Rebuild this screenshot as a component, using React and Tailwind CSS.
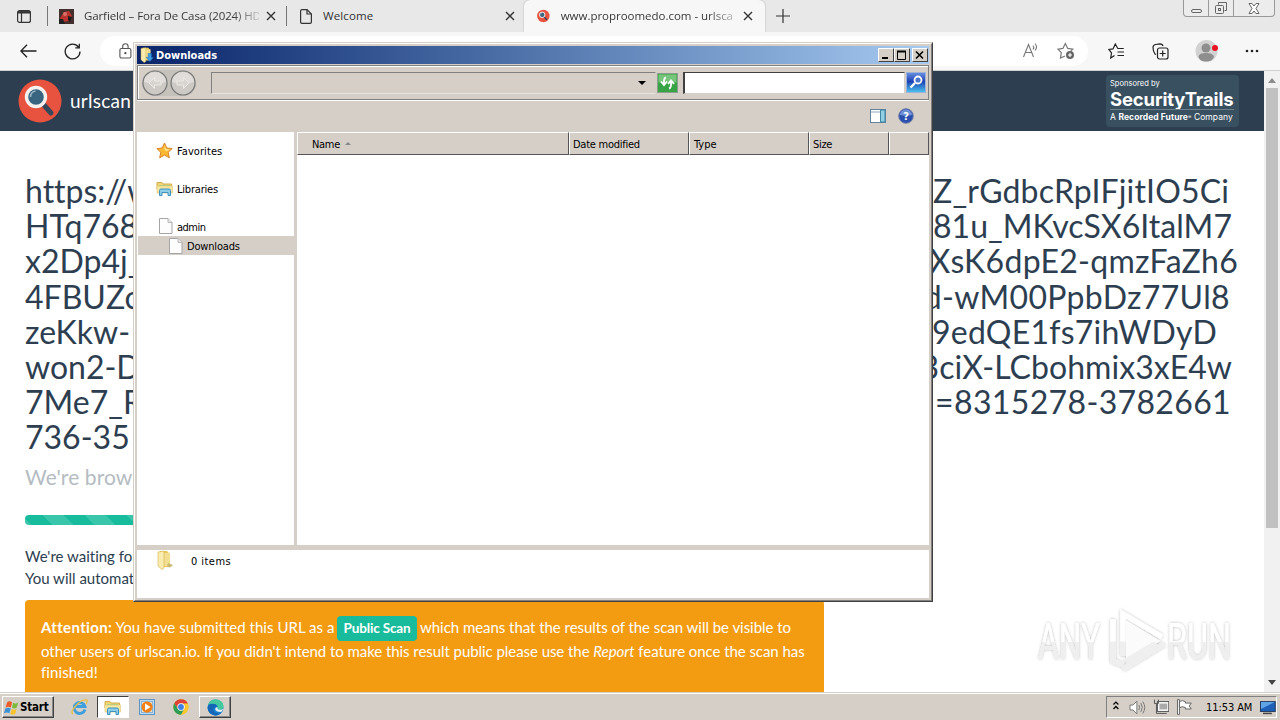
import React from 'react';

const urlLines = [
  { left: 'https://w', right: 'Z_rGdbcRpIFjitIO5Ci', style: 'mr-[35px] tracking-[0.150px]' },
  { left: 'HTq768', right: '81u_MKvcSX6ItalM7', style: 'mr-[32px] tracking-[0.050px]' },
  { left: 'x2Dp4j_', right: 'XsK6dpE2-qmzFaZh6', style: 'mr-[26px] tracking-[0.300px]' },
  { left: '4FBUZc', right: 'd-wM00PpbDz77Ul8', style: 'mr-[34px] tracking-[0.350px]' },
  { left: 'zeKkw-', right: '9edQE1fs7ihWDyD', style: 'mr-[47px] tracking-[0.250px]' },
  { left: 'won2-D', right: '3ciX-LCbohmix3xE4w', style: 'mr-[32px] tracking-[0.050px]' },
  { left: '7Me7_R', right: '=8315278-3782661', style: 'mr-[33px] tracking-[0.350px]' },
  { left: '736-35', right: '', style: 'mr-0' },
];

function CloseX() {
  return (
    <svg width="10" height="10" viewBox="0 0 10 10" stroke="#333" strokeWidth="1.4">
      <path d="M1 1l8 8M9 1L1 9" />
    </svg>
  );
}

function LensLogo({ size }) {
  return (
    <svg width={size} height={size} viewBox="0 0 44 44">
      <circle cx="22" cy="22" r="21.500" fill="#e8533f" />
      <path d="M25 25l8 9" stroke="#34485c" strokeWidth="5" strokeLinecap="round" />
      <circle cx="18" cy="18" r="9.5" fill="#3a6580" stroke="#f4f1ee" strokeWidth="3.4" />
      <path d="M12.500 18a6 6 0 0 1 5-6" fill="none" stroke="#9db9c8" strokeWidth="1.600" />
    </svg>
  );
}

function LibraryIcon({ className }) {
  return (
    <svg className={className} width="18" height="17" viewBox="0 0 18 17">
      <path d="M1 4V2.500h5l1 1.500h8.500V9H1z" fill="#f2d675" stroke="#d0ac4a" />
      <path d="M3 5h11v5H3z" fill="#a6d38d" />
      <path d="M1 6h15.500v7H1z" fill="#f8e7a0" stroke="#dfc469" strokeWidth=".6" />
      <path d="M3.500 15.500V10.500Q3.500 9 5 9h8q1.500 0 1.500 1.500v5H12v-3H6v3z" fill="#8ccdea" stroke="#3f91be" />
    </svg>
  );
}

function FileIcon() {
  return (
    <svg width="14" height="16" viewBox="0 0 14 16">
      <path d="M.5.5h8.500l4 4v11H.5z" fill="#fdfdfd" stroke="#a5a5a5" />
      <path d="M9 .5v4h4" fill="#e8e8e8" stroke="#b8b8b8" />
    </svg>
  );
}

function FolderIcon({ className, download }) {
  return (
    <svg className={className} width="17" height="20" viewBox="0 0 17 20">
      <path d="M3 1h7l2 2v14H3z" fill="#e9c95c" />
      <path d="M6 3h7v13H6z" fill="#f3df91" />
      <path d="M1 2l6-1v17l-2 1.500L1 16z" fill="#f9ecae" stroke="#d3b24c" strokeWidth=".6" />
      {download ? (
        <path d="M10 8h4v5h2.500L12 18l-4.500-5H10z" fill="#3ba0e6" stroke="#1c66b5" strokeWidth=".7" />
      ) : (
        <path d="M11 13l5 2-3 2.500-3-1z" fill="#c9ba72" />
      )}
    </svg>
  );
}

function TabBar() {
  return (
    <div className="flex h-8 bg-[#e8e8e8] text-[11.500px] text-[#333] font-['Open_Sans',sans-serif]">
      <div className="flex items-center w-[47px] pl-[17px]">
        <svg width="14" height="13" viewBox="0 0 14 13" fill="none" stroke="#333" strokeWidth="1.200">
          <rect x=".6" y=".6" width="12.800" height="11.800" rx="2" />
          <path d="M4.500 3v9" />
          <path d="M1 2.300h12" strokeWidth="2.400" />
        </svg>
      </div>
      <div className="flex items-center w-[239px] self-center h-5 border-l border-[#777] pl-[11px]">
        <svg width="15" height="15" viewBox="0 0 15 15">
          <rect width="15" height="15" fill="#43302d" />
          <path d="M1 9l4-6 5-1 3 5-3 5-6 1z" fill="#b93431" />
          <path d="M0 10h4l2 5H0z" fill="#222" />
          <circle cx="6" cy="5" r="2" fill="#da7168" />
          <path d="M9 7l4 1-2 5-2-2z" fill="#211a1a" />
        </svg>
        <span className="ml-2.5 w-[175px] whitespace-nowrap tracking-[-0.110px] bg-linear-to-r from-[#333] from-85% to-[#33333330] bg-clip-text text-transparent">
          Garfield – Fora De Casa (2024) HD
        </span>
        <span className="ml-[7px]"><CloseX /></span>
      </div>
      <div className="flex items-center w-[238px] self-center h-5 border-l border-[#777] pl-[13px]">
        <svg width="12" height="15" viewBox="0 0 12 15" fill="none" stroke="#333" strokeWidth="1.200">
          <path d="M.6 2q0-1.400 1.400-1.400h5l4.400 4.400v8q0 1.400-1.400 1.400H2Q.6 14.400.6 13z" />
          <path d="M7 .6V5h4.400" />
        </svg>
        <span className="ml-[11px] w-[182px] tracking-[0.100px]">Welcome</span>
        <CloseX />
      </div>
      <div className="flex items-center w-[241px] rounded-t-md bg-[#f7f7f7] shadow-[0_0_2px_#aaa] pl-[13px] pr-3">
        <LensLogo size={14} />
        <span className="ml-[11px] w-[174px] whitespace-nowrap tracking-[-0.020px] bg-linear-to-r from-[#333] from-85% to-[#33333350] bg-clip-text text-transparent">
          www.proproomedo.com - urlsca
        </span>
        <span className="ml-[10px]"><CloseX /></span>
      </div>
      <div className="flex items-center pl-[11px]">
        <svg width="14" height="14" viewBox="0 0 14 14" stroke="#333" strokeWidth="1.200">
          <path d="M7 0v14M0 7h14" />
        </svg>
      </div>
      <div className="ml-auto mr-[5px] flex h-[17px] w-[92px] rounded-b border border-t-0 border-[#999] bg-[#ececec]">
        <div className="flex w-[25px] items-end justify-center border-r border-[#999] pb-[3px]">
          <span className="h-[4px] w-[11px] rounded-sm border border-[#666]" />
        </div>
        <div className="flex w-[25px] items-center justify-center border-r border-[#999]">
          <svg width="14" height="14" viewBox="0 0 14 14" fill="none" stroke="#666">
            <path d="M4.500 3.500V1.500h8v8h-2" />
            <rect x="1.500" y="4.500" width="8" height="8" rx="1" />
            <rect x="4.500" y="7.500" width="2" height="2" />
          </svg>
        </div>
        <div className="flex flex-1 items-center justify-center">
          <svg width="12" height="11" viewBox="0 0 12 11" fill="#fff" stroke="#666">
            <path d="M1 .5h3l2 2.500 2-2.500h3L8 5.500l3 5H8L6 8l-2 2.500H1l3-5z" />
          </svg>
        </div>
      </div>
    </div>
  );
}

function Toolbar() {
  return (
    <div className="flex h-[39px] items-center border-b border-[#cfcfcf] bg-[#f7f7f7]">
      <div className="flex w-[100px] items-center gap-[27px] pl-5">
        <svg width="17" height="14" viewBox="0 0 17 14" fill="none" stroke="#222" strokeWidth="1.300">
          <path d="M7 .7L.9 7 7 13.300M1 7h15.500" />
        </svg>
        <svg width="17" height="17" viewBox="0 0 17 17" fill="none" stroke="#222" strokeWidth="1.300">
          <path d="M14.500 4A7.400 7.400 0 1 0 16 8.500M15.300.8v4h-4" />
        </svg>
      </div>
      <div className="flex h-[30px] w-[988px] items-center rounded-full bg-white pl-[19px] pr-[13px]">
        <svg width="13" height="16" viewBox="0 0 13 16" fill="none" stroke="#555" strokeWidth="1.100">
          <rect x=".9" y="5.500" width="11" height="9.500" rx="1.500" />
          <path d="M3.700 5.500V3.500a2.700 2.700 0 0 1 5.400 0v2" />
          <circle cx="6.400" cy="10.200" r=".6" fill="#555" />
        </svg>
        <svg className="ml-auto -mt-0.5" width="18" height="17" viewBox="0 0 18 17" fill="none" stroke="#777" strokeWidth="1.100">
          <path d="M1.500 15L6.500 2.500 11.500 15M3.300 10.500h6.500M11 3.500q1.500 2 0 4M13 1.500q3 3.500 0 7" />
        </svg>
        <svg className="ml-[17px]" width="18" height="18" viewBox="0 0 18 18" fill="none" stroke="#777" strokeWidth="1.200">
          <path d="M8 14l-4.500 2 .8-5.300L1 7.200l4.900-.8L8.300 1.500l2.500 4.900 5 .8-2 2" />
          <circle cx="13" cy="13" r="4" fill="#666" stroke="none" />
          <path d="M13 11v4M11 13h4" stroke="#fff" />
        </svg>
      </div>
      <svg className="ml-5" width="17" height="16" viewBox="0 0 17 16" fill="none" stroke="#222" strokeWidth="1.200">
        <path d="M6.500 12.500L2.700 15l.8-5L1 6.500l4-.6L7.300 1l2.500 4.500h6M9.500 9H16M9.500 12.500H16" />
      </svg>
      <svg className="ml-[27px]" width="17" height="17" viewBox="0 0 17 17" fill="none" stroke="#222" strokeWidth="1.200">
        <path d="M4 11.500l-1-.5Q1 8 1 4.500 1 2 3.500 1.500L8 .8q2.500 0 3 2.200" />
        <rect x="5.500" y="5" width="10.500" height="11" rx="2" />
        <path d="M10.700 7.500v6M7.700 10.500h6" />
      </svg>
      <svg className="ml-[26px]" width="24" height="24" viewBox="0 0 24 24">
        <circle cx="11.500" cy="12" r="11" fill="#d2d2d2" />
        <circle cx="11" cy="9" r="4.500" fill="#8e8e8e" />
        <path d="M3.500 18q0-4 7.500-4t8 4q-2 4.500-8 4.500T3.500 18" fill="#8e8e8e" />
        <circle cx="20" cy="9" r="3" fill="#e81123" />
      </svg>
      <svg className="ml-[26px]" width="14" height="4" viewBox="0 0 14 4" fill="#222">
        <circle cx="2" cy="2" r="1.300" /><circle cx="7" cy="2" r="1.300" /><circle cx="12" cy="2" r="1.300" />
      </svg>
    </div>
  );
}

function SiteHeader() {
  return (
    <div className="flex h-[60px] items-center bg-[#2c3e50] pl-[18px] pr-[25px]">
      <LensLogo size={44} />
      <span className="ml-[8px] text-[19px] tracking-[0.250px] text-white">urlscan</span>
      <div className="ml-auto flex h-[52px] w-[133px] flex-col rounded-sm bg-[#38505f] pl-[4px] font-['Inter',sans-serif] text-white">
        <span className="mt-[4px] text-[7.500px] leading-[10px] tracking-[0.050px]">Sponsored by</span>
        <span className="text-[18.500px] leading-[20px] font-bold tracking-[-0.150px]">SecurityTrails</span>
        <span className="w-[124px] border-t border-[#6b7f8c] pt-[2px] text-[8.500px] leading-[10px] tracking-[0.070px] whitespace-nowrap">
          A <b>Recorded Future</b>
          <span className="text-[5px] align-top">®</span> Company
        </span>
      </div>
    </div>
  );
}

function Watermark() {
  return (
    <svg className="absolute left-[1030px] top-[600px]" width="220" height="84" viewBox="0 0 220 84">
      <defs>
        <linearGradient id="mark" gradientUnits="userSpaceOnUse" x1="0" y1="0" x2="0" y2="84">
          <stop offset=".49" stopColor="#fff" />
          <stop offset=".5" stopColor="#efefef" />
        </linearGradient>
        <linearGradient id="letters" x1="0" y1="0" x2="0" y2="1">
          <stop offset=".5" stopColor="#fff" />
          <stop offset=".51" stopColor="#efefef" />
        </linearGradient>
        <filter id="glow" x="-10%" y="-20%" width="120%" height="140%">
          <feDropShadow dx="0" dy="0" stdDeviation="1.500" floodColor="#000" floodOpacity=".28" />
        </filter>
      </defs>
      <g filter="url(#glow)" fill="url(#letters)" fontFamily="Roboto, sans-serif" fontSize="50">
        <text transform="translate(8 59) scale(.635 1)">ANY</text>
        <text transform="translate(137 59) scale(.65 1)">RUN</text>
        <path d="M96 20L130 41 96 61z" fill="#fbfbfb" />
        <path d="M93 56V14l39 23M134 44L93 69M83 19v42l10 4M96 61l30-18" fill="none" stroke="url(#mark)" strokeWidth="5.500" />
      </g>
    </svg>
  );
}

function Page() {
  return (
    <div className="flex h-[621px] overflow-hidden bg-white font-['Lato',sans-serif] text-[#2c3e50]">
      <div className="w-[1264px]">
        <SiteHeader />
        <div className="pl-[25px] pt-[42px]">
          <div className="text-[32px] leading-[35.200px] [font-variant-ligatures:none]">
            {urlLines.map((line) => (
              <div key={line.left} className="flex justify-between whitespace-nowrap">
                <span>{line.left}</span>
                <span className={line.style}>{line.right}</span>
              </div>
            ))}
          </div>
          <p className="mt-[9px] text-[21px] leading-[26px] tracking-[0.100px] text-[#b4bcc2]">We're brow</p>
          <div className="mt-[25px] h-[10px] w-[799px] rounded bg-[#18bc9c] bg-[linear-gradient(45deg,#ffffff26_25%,transparent_25%,transparent_50%,#ffffff26_50%,#ffffff26_75%,transparent_75%)] bg-[length:42px_42px] bg-[position:18px_0]" />
          <div className="mt-[20px] text-[15px] leading-[22px] [font-variant-ligatures:none]">
            <p>We're waiting for</p>
            <p>You will automatic</p>
          </div>
          <div className="mt-[11px] h-[110px] w-[799px] rounded bg-[#f39c12] px-4 pt-[16px] text-[15px] leading-[21.500px] text-white whitespace-nowrap">
            <p className="flex h-[25px] items-center">
              <span className="w-[293px] tracking-[0.030px]"><b className="tracking-[0.350px]">Attention:</b> You have submitted this URL as a</span>
              <span className="ml-[3px] mr-[3px] flex h-[25px] w-20 items-center justify-center rounded-sm bg-[#18bc9c] pt-0.5 text-[13.500px] font-bold tracking-[-0.150px]">Public Scan</span>
              <span className="tracking-[-0.040px]">which means that the results of the scan will be visible to</span>
            </p>
            <p className="tracking-[-0.060px]">other users of urlscan.io. If you didn't intend to make this result public please use the <i>Report</i> feature once the scan has</p>
            <p className="tracking-[0.100px]">finished!</p>
          </div>
        </div>
      </div>
      <div className="flex w-4 flex-col items-center bg-[#f1f1f1]">
        <svg className="mt-[7px]" width="8" height="5" viewBox="0 0 8 5" fill="#8b8b8b"><path d="M4 0l4 5H0z" /></svg>
        <div className="mt-[5px] h-[440px] w-3 bg-[#c1c1c1]" />
        <svg className="mt-auto mb-[7px]" width="8" height="5" viewBox="0 0 8 5" fill="#444"><path d="M0 0h8L4 5z" /></svg>
      </div>
    </div>
  );
}

function CaptionButton({ children, className }) {
  return (
    <div className={`flex h-[14px] w-4 items-center justify-center border border-t-white border-l-white border-r-[#404040] border-b-[#404040] bg-[#d6cfc8] ${className}`}>
      <svg width="12" height="10" viewBox="0 0 12 10" fill="none" stroke="#000">{children}</svg>
    </div>
  );
}

function NavButton({ flip }) {
  return (
    <svg className={flip ? '-scale-x-100' : ''} width="26" height="26" viewBox="0 0 26 26">
      <circle cx="13" cy="13" r="12" fill="#cdcac6" stroke="#777" strokeWidth="1.200" />
      <path d="M2 12a11 10 0 0 1 22 0q-11 4-22 0" fill="#e0ddda" />
      <path d="M12.500 7.500L7 13l5.500 5.500V15H19v-4h-6.500z" fill="#d8d5d1" stroke="#ebe9e6" />
    </svg>
  );
}

function ColumnHeader({ className, children }) {
  return (
    <div className={`flex h-[23px] items-center border-t border-l border-t-white border-l-white border-r border-b border-r-[#555] border-b-[#555] pt-[3px] ${className}`}>
      {children}
    </div>
  );
}

function ExplorerWindow() {
  return (
    <div className="absolute left-[133px] top-[42px] h-[560px] w-[800px] border border-t-[#d6cfc8] border-l-[#d6cfc8] border-r-[#404040] border-b-[#404040] bg-[#d6cfc8] text-[11px] text-black font-['DejaVu_Sans_Condensed','DejaVu_Sans',sans-serif]">
      <div className="flex h-full flex-col border border-t-white border-l-white border-r-[#808080] border-b-[#808080] p-[2px]">
        <div className="flex h-[18px] shrink-0 items-center bg-linear-to-r from-[#0a246a] to-[#a6caf0] pl-0.5 pr-px">
          <FolderIcon className="h-4 w-4" download />
          <span className="ml-px pt-[2px] font-bold text-white">Downloads</span>
          <CaptionButton className="ml-auto"><path d="M2 8h6" strokeWidth="2" /></CaptionButton>
          <CaptionButton><path d="M1.500 1v8.500h8V1M1 1.500h9" /><path d="M1 1.500h9" strokeWidth="2" /></CaptionButton>
          <CaptionButton className="ml-[2px]"><path d="M2 1.500l7 7M9 1.500l-7 7" strokeWidth="1.600" /></CaptionButton>
        </div>

        <div className="mt-px flex h-[35px] shrink-0 items-center border border-[#808080] shadow-[inset_1px_1px_#fff,0_1px_#fff] pl-[4px]">
          <div className="flex gap-[2px] rounded-full bg-[#c5c1bb]">
            <NavButton />
            <NavButton flip />
          </div>
          <div className="ml-[15px] flex h-[22px] w-[445px] items-center justify-end border border-t-[#808080] border-l-[#808080] border-r-transparent border-b-[#e8e4df] pr-[9px]">
            <svg width="8" height="4" viewBox="0 0 8 4"><path d="M0 0h8L4 4z" /></svg>
          </div>
          <svg className="ml-px" width="21" height="20" viewBox="0 0 21 20">
            <rect x=".5" y=".5" width="20" height="19" fill="#37a344" stroke="#8c9d8b" />
            <rect x="1.500" y="1.500" width="18" height="8" fill="#77c47b" />
            <path d="M9 4.500Q6.500 5 7 11M4 8.500l3 3.500 3-3.500M12 15.500q2.500-.5 2-6.500M11 11l3-3.500 3 3.500" fill="none" stroke="#fff" strokeWidth="1.800" />
          </svg>
          <div className="ml-[5px] h-[22px] w-[222px] border border-t-[#404040] border-l-2 border-l-[#404040] border-r-[#d6cfc8] border-b-[#d6cfc8] bg-white" />
          <svg className="ml-px" width="20" height="21" viewBox="0 0 20 21">
            <defs>
              <linearGradient id="find" x1="0" y1="0" x2="0" y2="1">
                <stop offset="0" stopColor="#6b92e0" />
                <stop offset=".45" stopColor="#1c43b4" />
                <stop offset="1" stopColor="#4cc6ef" />
              </linearGradient>
            </defs>
            <rect x=".5" y=".5" width="19" height="20" fill="url(#find)" stroke="#9bb2dc" />
            <circle cx="12" cy="8" r="3.500" fill="#4b75cc" stroke="#fff" strokeWidth="1.800" />
            <path d="M9 11l-4.500 4.500" stroke="#fff" strokeWidth="2.400" />
          </svg>
        </div>

        <div className="flex h-[32px] shrink-0 items-center justify-end pr-[15px]">
          <svg width="16" height="14" viewBox="0 0 16 14">
            <rect x=".5" y=".5" width="15" height="13" fill="#fff" stroke="#63839b" />
            <path d="M1 3h9" stroke="#8ba8c0" />
            <rect x="10.500" y="1" width="4.500" height="12" fill="#8fd0e4" stroke="#4183a3" />
          </svg>
          <svg className="ml-[12px]" width="16" height="16" viewBox="0 0 16 16">
            <circle cx="8" cy="8" r="7.300" fill="#2c4fae" stroke="#7181a8" />
            <path d="M2 7a6 5.500 0 0 1 12 0q-6 1.500-12 0" fill="#6f8fd6" />
            <text x="8" y="12" textAnchor="middle" fill="#fff" fontSize="11" fontWeight="bold">?</text>
          </svg>
        </div>

        <div className="flex h-[413px] shrink-0">
          <div className="w-[157px] bg-white">
            <div className="mt-[8px] flex h-5 items-center pl-[19px]">
              <svg width="17" height="17" viewBox="0 0 17 17">
                <path d="M8.500 1l2.300 5 5.400.6-4 3.700 1.100 5.500-4.800-2.700-4.800 2.700 1.100-5.500-4-3.700 5.400-.6z" fill="#fbb830" stroke="#d9822b" />
                <path d="M8.500 3l1.500 4 4 .5-3.500 2L8.500 8z" fill="#fde28a" />
              </svg>
              <span className="ml-[4px] pt-[4px] tracking-[0.080px]">Favorites</span>
            </div>
            <div className="mt-[18px] flex h-5 items-center pl-[19px]">
              <LibraryIcon />
              <span className="ml-[3px] pt-[4px] tracking-[-0.200px]">Libraries</span>
            </div>
            <div className="mt-[18px] flex h-5 items-center pl-[22px]">
              <FileIcon />
              <span className="ml-[4px] pt-[4px] tracking-[-0.500px]">admin</span>
            </div>
            <div className="ml-px flex h-[19px] items-center bg-[#d6cfc8] pl-[31px]">
              <FileIcon />
              <span className="ml-[4px] pt-[3px] tracking-[-0.180px]">Downloads</span>
            </div>
          </div>
          <div className="ml-[3px] flex-1 bg-white">
            <div className="flex bg-[#d6cfc8]">
              <ColumnHeader className="w-[272px] pl-[14px]">
                <span className="tracking-[-0.300px]">Name</span>
                <svg className="ml-[5px] -mt-1" width="6" height="3" viewBox="0 0 6 3" fill="#888"><path d="M3 0l3 3H0z" /></svg>
              </ColumnHeader>
              <ColumnHeader className="w-[120px] pl-[3px] tracking-[-0.260px]">Date modified</ColumnHeader>
              <ColumnHeader className="w-[120px] pl-[4px]">Type</ColumnHeader>
              <ColumnHeader className="w-[80px] pl-[3px] tracking-[-0.300px]">Size</ColumnHeader>
              <ColumnHeader className="w-[40px]" />
            </div>
          </div>
        </div>

        <div className="mt-[5px] flex flex-1 bg-white pl-[20px]">
          <FolderIcon />
          <span className="ml-[17px] mt-[4px] tracking-[0.450px]">0 items</span>
        </div>
      </div>
    </div>
  );
}

function Taskbar() {
  return (
    <div className="flex h-7 items-center border-t border-[#d6cfc8] bg-[#d6cfc8] pl-[2px] pr-[3px] text-[11px] text-black shadow-[inset_0_1px_#fff] font-['DejaVu_Sans_Condensed','DejaVu_Sans',sans-serif]">
      <div className="mt-px flex h-[22px] w-[52px] items-center border border-t-white border-l-white border-r-[#404040] border-b-[#404040] pl-px shadow-[inset_-1px_-1px_#888]">
        <svg width="16" height="15" viewBox="0 0 15 14">
          <path d="M3 2q2-1.500 4.500 0L6.500 7Q4 5.500 1.500 7z" fill="#ec5b28" />
          <path d="M8.500 2.500q2.500 1.500 5-.5l-1.500 5q-2 1.500-4.500.3z" fill="#7dbb3d" />
          <path d="M1.300 8q2.500-1.500 5 0L5 12.500Q3 11 0 12.500z" fill="#3b93d6" />
          <path d="M7.300 8.500q2.500 1.300 4.500 0l-1.300 4.500q-2.500 1.300-4.500 0z" fill="#fac22b" />
        </svg>
        <span className="pt-[2px] text-[11.500px] font-bold tracking-[-0.200px]">Start</span>
      </div>
      <svg className="ml-[17px]" width="17" height="18" viewBox="0 0 17 18" fill="none">
        <path d="M14 11.500A5.500 5.500 0 1 1 14 8.500H5" stroke="#3f9fdc" strokeWidth="2.800" />
        <path d="M2 16Q-1 14 5 7.500T16 2q1 1-1 4" stroke="#eabf45" strokeWidth="1.300" />
      </svg>
      <div className="ml-[9px] mt-px flex h-[22px] w-[32px] items-center justify-center border border-t-[#404040] border-l-[#404040] border-r-white border-b-white bg-white">
        <LibraryIcon />
      </div>
      <svg className="ml-[10px]" width="16" height="16" viewBox="0 0 16 16">
        <rect x=".5" y=".5" width="15" height="15" fill="#b9dcf3" stroke="#5e93c2" />
        <rect x="2.500" y="2.500" width="11" height="11" fill="#f7e3c4" stroke="#88b4d8" />
        <circle cx="8" cy="8" r="5.500" fill="#f08019" />
        <path d="M6 4.500l5.500 3.500L6 11.500z" fill="#fff" />
      </svg>
      <svg className="ml-[18px]" width="16" height="16" viewBox="0 0 16 16">
        <circle cx="8" cy="8" r="7.700" fill="#f9c732" />
        <path d="M1.300 4.200A7.700 7.700 0 0 1 14.800 4.400H8L4.800 10z" fill="#dc4437" />
        <path d="M1.300 4.200A7.700 7.700 0 0 0 8 15.700l3.200-5.900L8 11.500 4.800 9.800z" fill="#2e9d57" />
        <circle cx="8" cy="8" r="3.700" fill="#fff" />
        <circle cx="8" cy="8" r="2.900" fill="#3f7fe8" />
      </svg>
      <div className="ml-[10px] mt-px flex h-[22px] w-[32px] items-center justify-center border border-t-white border-l-white border-r-[#404040] border-b-[#404040] shadow-[inset_-1px_-1px_#888]">
        <svg width="17" height="17" viewBox="0 0 17 17">
          <circle cx="8.500" cy="8.500" r="8" fill="#1680cf" />
          <path d="M1 6Q3 0 9 .5q7 .5 7.500 6.500 0 4-4 4-3 0-2-2Q11 6 7.500 5 4 4.500 1 6" fill="#43c8a0" />
          <path d="M.6 9Q1 5 5 4.800q5 0 5.500 3.200-4-.5-4 3 1 4 7 3.500-3 3-7 1.500Q1 14 .6 9" fill="#1566b6" />
          <path d="M10.500 8q0 1 0 1.500 0 1.500 3 1.300 2 0 2.700-1-.5 3-3 3.200-5-.5-5-3 .3-2 2.300-2" fill="#e4eef4" />
        </svg>
      </div>

      <div className="ml-auto mt-px flex h-[22px] w-[171px] items-center border border-t-[#808080] border-l-[#808080] border-r-white border-b-white pl-[6px]">
        <svg className="-mt-1" width="6" height="9" viewBox="0 0 6 9" fill="none" stroke="#000" strokeWidth="1.300">
          <path d="M.5 3.500L3 1l2.500 2.500M.5 8L3 5.500 5.500 8" />
        </svg>
        <svg className="ml-[10px]" width="17" height="15" viewBox="0 0 17 15" fill="none" stroke="#777">
          <path d="M1 5h3l4-4v13l-4-4H1z" fill="#fff" />
          <path d="M10 5q1.500 2.500 0 5M12 3q3 4.500 0 9M14 1.500q4 6 0 12" />
        </svg>
        <svg className="ml-[7px]" width="17" height="16" viewBox="0 0 17 16" fill="none" stroke="#555">
          <rect x="5.500" y="3.500" width="10" height="8" fill="#aaa" stroke="#fff" strokeWidth="2" />
          <rect x="4.500" y="2.500" width="11.500" height="10" />
          <path d="M7 14.500h7M1.500.5v4h4v-4M3.500 5v9.500h4" />
        </svg>
        <svg className="ml-[7px]" width="17" height="16" viewBox="0 0 17 16" fill="#fff" stroke="#666">
          <path d="M1.500.5h2v15h-2zM3.500 2.500q3-2 6 0v1.500h6l-2 3 2 3H9.500V8.500q-3-1.500-6 0z" />
        </svg>
        <span className="ml-[13px] pt-[2px] whitespace-nowrap tracking-[-0.100px]">11:53 AM</span>
        <svg className="ml-[8px]" width="16" height="15" viewBox="0 0 16 15">
          <rect x=".5" y="1.500" width="15" height="10" fill="#1e5fb8" stroke="#24395e" />
          <path d="M1 2h14L1 9z" fill="#5fa4e6" />
          <path d="M3 13.500h9" stroke="#444" strokeWidth="1.500" />
        </svg>
      </div>
    </div>
  );
}

function App() {
  return (
    <div className="relative flex h-[720px] w-[1280px] flex-col overflow-hidden bg-white">
      <TabBar />
      <Toolbar />
      <Page />
      <Taskbar />
      <Watermark />
      <ExplorerWindow />
    </div>
  );
}

export default App;
